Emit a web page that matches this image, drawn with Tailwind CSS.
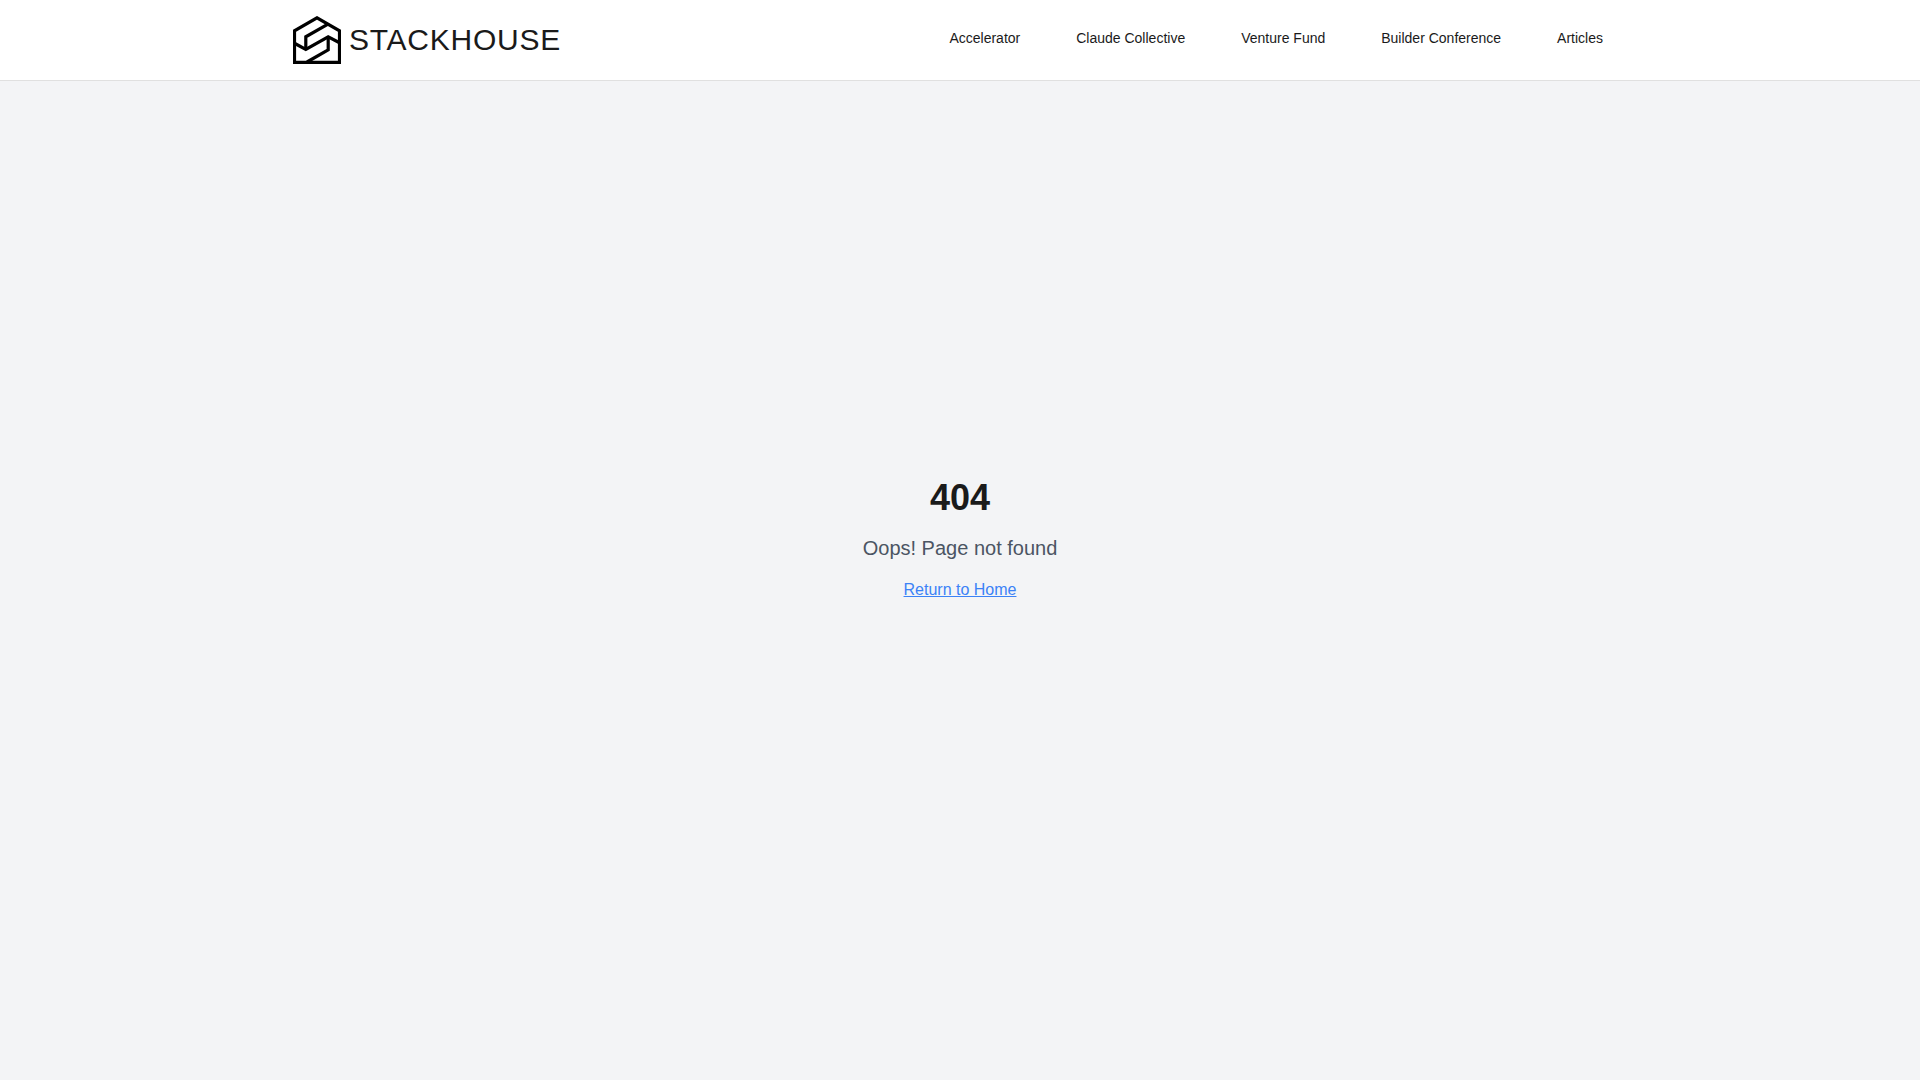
<!DOCTYPE html>
<html lang="en">
  <head>
    <meta charset="UTF-8" />
    <meta name="viewport" content="width=device-width, initial-scale=1.0" />
    <title>Stackhouse</title>
    <script src="https://cdn.jsdelivr.net/npm/@tailwindcss/browser@4"></script>
  </head>

  <body class="bg-[#f3f4f6] text-[#1a1a1a] font-['Liberation_Sans',Arial,sans-serif]">
    <header class="fixed inset-x-0 top-0 z-10 bg-white border-b border-[#e0e0e0]">
      <div class="mx-auto flex h-20 max-w-[1398px] items-center justify-between px-8">
        <a href="/" class="flex items-center gap-2">
          <svg
            class="size-12"
            viewBox="0 0 48 48"
            fill="none"
            stroke="#000"
            stroke-width="3.2"
            aria-hidden="true"
          >
            <path d="M1.5 46.4V14.8L24 1.8L46.5 14.8V46.4Z" />
            <path d="M35 8.2L12.8 20.8V33.5" />
            <path d="M1 27L12.8 33.5L35.2 20.8L47 27" />
            <path d="M35.2 20.8V33.8L14 46" />
          </svg>
          <span class="text-3xl tracking-wide">STACKHOUSE</span>
        </a>
        <nav class="flex gap-2 pb-1 text-sm">
          <a href="/accelerator" class="px-6 hover:text-blue-500">Accelerator</a>
          <a href="/collective" class="px-6 hover:text-blue-500">Claude Collective</a>
          <a href="/fund" class="px-6 hover:text-blue-500">Venture Fund</a>
          <a href="/conference" class="px-6 hover:text-blue-500">Builder Conference</a>
          <a href="/articles" class="px-6 hover:text-blue-500">Articles</a>
        </nav>
      </div>
    </header>

    <main class="flex min-h-screen items-center justify-center">
      <div class="text-center">
        <h1 class="mb-4 text-4xl font-bold">404</h1>
        <p class="mb-4 text-xl text-[#4b5563]">Oops! Page not found</p>
        <a href="/" class="text-[#3b82f6] underline hover:text-blue-700">Return to Home</a>
      </div>
    </main>
  </body>
</html>
